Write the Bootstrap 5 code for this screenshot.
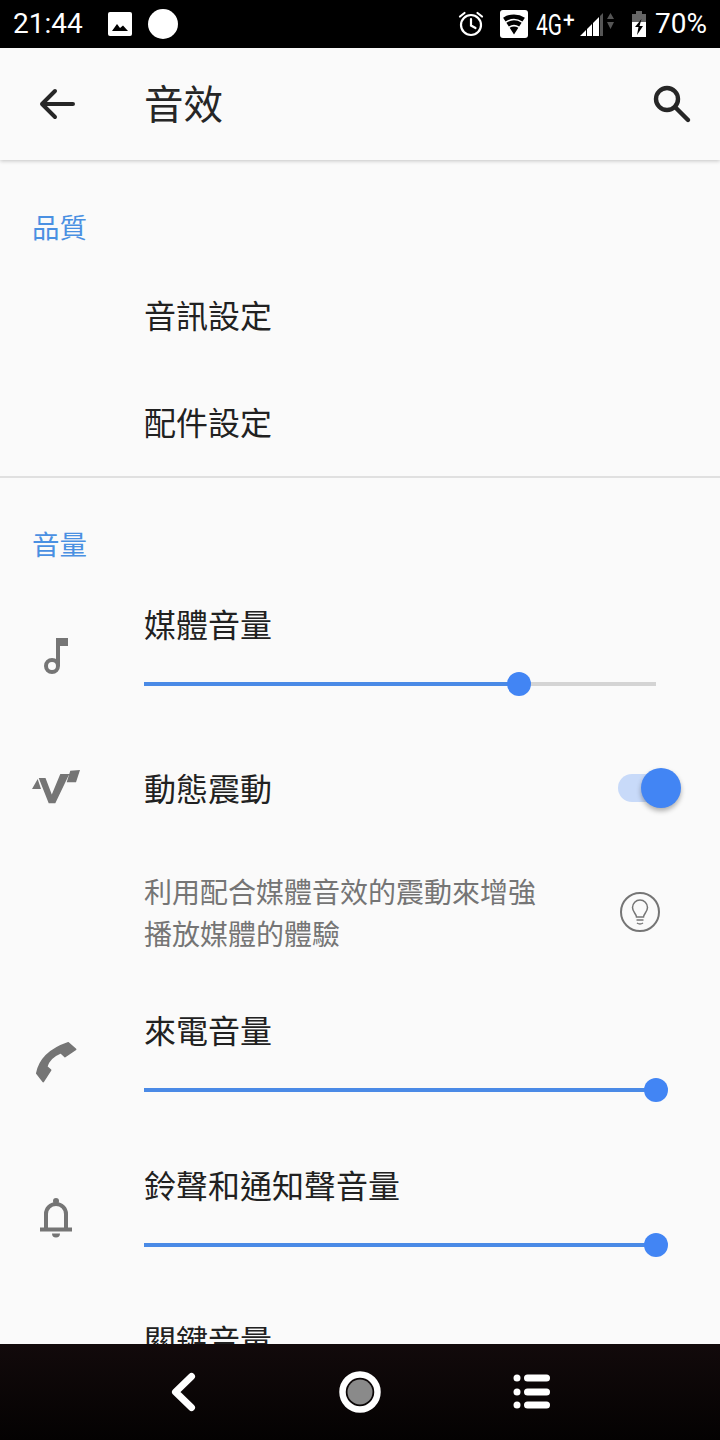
<!DOCTYPE html>
<html lang="zh-Hant">
<head>
<meta charset="utf-8">
<title>音效</title>
<link href="https://cdn.jsdelivr.net/npm/bootstrap@5.3.0/dist/css/bootstrap.min.css" rel="stylesheet">
<style>
html,body{height:1440px;overflow:hidden}
body{background:#fafafa;color:#212121;font-family:Roboto,"Noto Sans CJK TC",sans-serif}
.shell{height:1440px}
.cjk{font-family:"Noto Sans CJK TC",sans-serif}
.statusbar{height:48px;background:#000;color:#fff;padding:0 13px}
.clock{font-size:28px;line-height:48px;width:95px}
.pct{font-size:28px;line-height:48px}
.net{width:38px;margin-right:5px;height:48px}
.net-main{display:block;flex:none;width:27px;font-size:29px;font-weight:400;line-height:50px;transform:scaleX(.72);transform-origin:left center;white-space:nowrap}
.net-plus{font-size:21px;font-weight:500;line-height:40px;height:40px}
.alarm{margin-right:15px}
.appbar{height:112px;background:#fafafa;box-shadow:0 1px 4px rgba(0,0,0,.22);position:relative;z-index:2;padding:0 28px 0 32px}
.appbar h1{font-size:39.5px;font-weight:400;margin:0 0 0 62px;line-height:108px;height:112px;color:#262626}
.content{min-height:0;overflow:hidden}
.seclabel{font-size:27.5px;line-height:40px;color:#4a90e2;padding-left:32px}
.plainrow{height:107px;padding-left:144px;font-size:32px;line-height:105px}
.rule{height:2px;background:#e0e0e0}
.ico{width:144px;flex:none;display:flex;justify-content:center;align-items:flex-start;padding-right:32px}
.ttl{font-size:32px;line-height:40px;color:#212121}
.subttl{font-size:28px;line-height:42px;color:#757575;margin:-2px 0 0 144px;width:400px}
.track{position:relative;height:4px;background:#d4d4d4;width:512px;margin-top:39px}
.fill{height:4px;background:#4a8ae6}
.thumb{position:absolute;top:-10px;width:24px;height:24px;border-radius:50%;background:#4285f4;margin-left:-12px}
.swtrack{position:relative;width:52px;height:28px;border-radius:14px;background:#c8daf9;margin-right:50px}
.swthumb{position:absolute;left:23px;top:-6px;width:40px;height:40px;border-radius:50%;background:#4285f4;box-shadow:0 3px 5px rgba(0,0,0,.3)}
.navbarb{height:96px;background:linear-gradient(#120a0b,#040202);gap:128px}
.sec1{padding-top:46px;height:102px}
.sec2{padding-top:45px;height:105px}
.item-media{height:153px;padding-top:20px}
.item-media .ico svg{margin-top:29px}
.item-motion{height:104px}
.item-motion .ttl{margin-top:-3px}
.item-motion .ico svg{margin-top:2px}
.item-sub{height:145px}
.item-sub svg{margin-right:60px;margin-top:-2px}
.item-slider{height:155px;padding-top:24px}
.item-ring .ico svg{margin-top:29px}
.item-notif .ico svg{margin-top:30px}
.last-ttl{margin:24px 0 0 144px}
</style>
</head>
<body>
<div class="shell d-flex flex-column">
  <div class="statusbar d-flex align-items-center flex-shrink-0">
    <div class="clock">21:44</div>
    <svg width="24" height="24" viewBox="0 0 24 24"><rect width="24" height="24" rx="2" fill="#fff"/><path d="M4 19l5-7 3 4 3-2.500 5 5.500z" fill="#000"/></svg>
    <svg class="ms-3" width="30" height="30" viewBox="0 0 30 30"><circle cx="15" cy="15" r="15" fill="#fff"/></svg>
    <div class="ms-auto d-flex align-items-center">
      <svg class="alarm" width="28" height="28" viewBox="0 0 28 28" fill="none" stroke="#fff" stroke-width="2.200"><circle cx="14" cy="15" r="10"/><path d="M14 9v6.500l4.500 2.500M3 6.500l4.500-3.500M25 6.500L20.500 3" stroke-linecap="round"/></svg>
      <svg width="28" height="28" viewBox="0 0 28 28"><rect width="28" height="28" rx="3" fill="#fff"/><path d="M3.100 7.700A20 20 0 0 1 24.900 7.700L22.450 11.500A15.500 15.500 0 0 0 5.550 11.500ZM6.370 12.750A14 14 0 0 1 21.630 12.750L19.180 16.500A9.500 9.500 0 0 0 8.820 16.500ZM9.640 17.800A8 8 0 0 1 18.360 17.800L14 24.500Z" fill="#000"/></svg>
      <div class="net ms-2 d-flex"><span class="net-main">4G</span><span class="net-plus">+</span></div>
      <svg width="36" height="26" viewBox="0 0 36 26"><path d="M1 25L7 19V25zM8 18L13 13V25H8zM14 12L20 6V25H14z" fill="#fff"/><path d="M21 5L24 2V25H21z" fill="#555"/><path d="M28 8L31.500 2 35 8zM28 11H35L31.500 18z" fill="#555"/></svg>
      <svg class="ms-3" width="16" height="27" viewBox="0 0 16 27"><path d="M5 0h6v3h4v8H1V3h4z" fill="#666"/><path d="M1 11h14v15H1z" fill="#fff"/><path d="M10.500 8L4 16h3.500L6 24l6-9H8.500z" fill="#000"/></svg>
      <span class="pct ms-2">70%</span>
    </div>
  </div>

  <div class="appbar d-flex align-items-center flex-shrink-0">
    <svg width="50" height="48" viewBox="0 0 50 48" fill="none" stroke="#262626" stroke-width="4" stroke-linecap="round" stroke-linejoin="round"><path d="M10 24h31M23 11L10 24l13 13"/></svg>
    <h1 class="cjk">音效</h1>
    <svg class="ms-auto" width="40" height="44" viewBox="0 0 40 44" fill="none" stroke="#262626" stroke-width="4.400"><circle cx="15" cy="17" r="11"/><path d="M23 25l13 13" stroke-linecap="round"/></svg>
  </div>

  <div class="content flex-grow-1 cjk">
    <div class="seclabel sec1">品質</div>
    <div class="plainrow">音訊設定</div>
    <div class="plainrow">配件設定</div>
    <div class="rule"></div>
    <div class="seclabel sec2">音量</div>

    <div class="d-flex item-media">
      <div class="ico"><svg width="48" height="48" viewBox="0 0 48 48" fill="none"><path d="M24 6h12v8h-8v20h-4z" fill="#757575"/><circle cx="20" cy="34" r="6" stroke="#757575" stroke-width="4"/></svg></div>
      <div>
        <div class="ttl">媒體音量</div>
        <div class="track"><div class="fill" style="width:73.2%"></div><div class="thumb" style="left:73.2%"></div></div>
      </div>
    </div>

    <div class="d-flex align-items-center item-motion">
      <div class="ico align-items-center"><svg width="48" height="48" viewBox="0 0 48 48"><path d="M0 24L5.700 14 9 24zM6.700 13H13.500L19.800 29.500 28.300 9H37.300L23.300 38.300H16.700zM38.300 5.700L48 5 44 17.300H34.700z" fill="#757575"/></svg></div>
      <div class="ttl">動態震動</div>
      <div class="swtrack ms-auto"><div class="swthumb"></div></div>
    </div>

    <div class="d-flex align-items-center item-sub">
      <div class="subttl">利用配合媒體音效的震動來增強<br>播放媒體的體驗</div>
      <svg class="ms-auto" width="40" height="40" viewBox="0 0 40 40" fill="none" stroke="#757575"><circle cx="20" cy="20" r="19" stroke-width="2"/><path d="M16.500 25c0-3-4-5-4-9.500a7.500 7.500 0 0 1 15 0c0 4.500-4 6.500-4 9.500z M16.500 28h7M17 31q3 2 6 0" stroke-width="1.500"/></svg>
    </div>

    <div class="d-flex item-slider item-ring">
      <div class="ico"><svg width="48" height="48" viewBox="0 0 48 48"><path d="M36.300 4.700L43.700 11.300 33 18.700 28.700 14.700Q17.300 19.300 14.700 28.700L18.700 32 11.300 43.700 4.700 35.300Q8.900 14 36.300 4.700Z" fill="#757575" stroke="#757575" stroke-width="1.500" stroke-linejoin="round"/></svg></div>
      <div>
        <div class="ttl">來電音量</div>
        <div class="track"><div class="fill" style="width:100%"></div><div class="thumb" style="left:100%"></div></div>
      </div>
    </div>

    <div class="d-flex item-slider item-notif">
      <div class="ico"><svg width="48" height="48" viewBox="0 0 48 48" fill="none"><path d="M14 34V20a10 10 0 0 1 20 0v14" stroke="#757575" stroke-width="4"/><circle cx="24" cy="7" r="3" fill="#757575"/><path d="M8 33.500h32v4H8zM20 39.500h8a4 4 0 0 1-8 0z" fill="#757575"/></svg></div>
      <div>
        <div class="ttl">鈴聲和通知聲音量</div>
        <div class="track"><div class="fill" style="width:100%"></div><div class="thumb" style="left:100%"></div></div>
      </div>
    </div>

    <div class="ttl last-ttl">關鍵音量</div>
  </div>

  <div class="navbarb d-flex align-items-center justify-content-center flex-shrink-0">
    <svg width="48" height="48" viewBox="0 0 48 48" fill="none" stroke="#fff" stroke-width="7" stroke-linecap="round" stroke-linejoin="round"><path d="M31.500 8.500L15.500 24l16 15.500"/></svg>
    <svg width="48" height="48" viewBox="0 0 48 48" fill="none"><circle cx="24" cy="24" r="17.500" stroke="#fff" stroke-width="6.500"/><circle cx="24" cy="24" r="12.500" fill="#8a8a8a"/></svg>
    <svg width="48" height="48" viewBox="0 0 48 48" fill="#fff"><circle cx="5" cy="10" r="3.500"/><circle cx="5" cy="24" r="3.500"/><circle cx="5" cy="37" r="3.500"/><rect x="12" y="6.500" width="26" height="7" rx="3.500"/><rect x="12" y="20.500" width="26" height="7" rx="3.500"/><rect x="12" y="33.500" width="26" height="7" rx="3.500"/></svg>
  </div>
</div>
</body>
</html>
